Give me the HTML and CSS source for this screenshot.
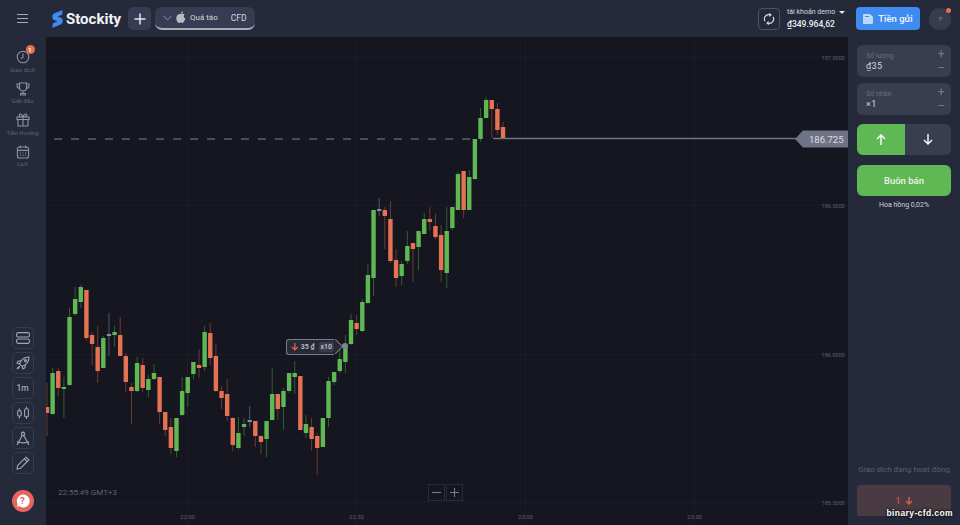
FILE: index.html
```html
<!DOCTYPE html>
<html lang="vi">
<head>
<meta charset="UTF-8">
<meta name="viewport" content="width=device-width, initial-scale=1.0">
<title>Stockity</title>
<link rel="stylesheet" href="styles.css">
</head>
<body>

<div class="app">
<header class="topbar">
    <div class="menu-btn"><span></span><span></span><span></span></div>
    <div class="logo">
        <svg width="11" height="18" viewBox="0 0 11 18">
            <path d="M10.5 0 L2 3.6 Q.4 4.4 .4 6 L.4 8 Q.4 9.4 2 10 L5.5 11.2 L.8 13.4 L.4 18 L9 14.2 Q10.6 13.4 10.6 12 L10.6 9.6 Q10.6 8.2 9 7.7 L5.6 6.6 L10.2 4.6 Z" fill="#3f8cf0"/>
        </svg>
        <span>Stockity</span>
    </div>
    <div class="add-btn">
        <svg width="12" height="12" viewBox="0 0 12 12"><path d="M6 .5V11.5M.5 6H11.5" stroke="#e6e8ee" stroke-width="1.5"/></svg>
    </div>
    <div class="asset">
        <svg class="asset-chev" width="9" height="6" viewBox="0 0 9 6"><path d="M.7 1 L4.5 5 L8.3 1" fill="none" stroke="#8e92a3" stroke-width="1"/></svg>
        <svg class="asset-apple" width="10" height="13" viewBox="0 0 10 13">
            <path d="M5 3.2C6 2.6 7.6 2.5 8.6 3.6 7.2 4.6 7.4 6.8 9.4 7.6 8.8 9.6 7.6 11.9 6.4 11.9 5.6 11.9 5.4 11.4 4.6 11.4 3.8 11.4 3.4 11.9 2.8 11.9 1.6 11.9 .3 9.2 .3 7 .3 4 3 2.4 5 3.2ZM4.9 2.7C4.8 1.6 5.8 .5 7 .4 7.1 1.6 6 2.8 4.9 2.7Z" fill="#b9bbc4"/>
        </svg>
        <span class="asset-name">Quả táo</span>
        <span class="asset-type">CFD</span>
    </div>

    <div class="topbar-right">
        <div class="sync-btn">
            <svg width="12" height="12" viewBox="0 0 12 12" fill="none" stroke="#dfe1e8" stroke-width="1.1">
                <path d="M2 8.2A4.3 4.3 0 0 1 6.8 1.8M10 3.8A4.3 4.3 0 0 1 5.2 10.2"/>
                <path d="M6.2 .4 L8 2 L6.2 3.4M5.8 8.6 L4 10 L5.8 11.6"/>
            </svg>
        </div>
        <div class="account">
            <div class="account-name">tài khoản demo <i class="caret"></i></div>
            <div class="account-balance">₫349.964,62</div>
        </div>
        <div class="deposit-btn">
            <svg width="10" height="10" viewBox="0 0 10 10"><path d="M1 0H7L10 3V9Q10 10 9 10H1Q0 10 0 9V1Q0 0 1 0Z" fill="#bcd8fb"/><path d="M2 2.5H6" stroke="#3f8cf0"/></svg>
            <span>Tiền gửi</span>
        </div>
        <div class="avatar">
            <svg width="5" height="4" viewBox="0 0 6 5"><path d="M0 0H6L3 5Z" fill="#5f6375"/></svg>
            <i class="avatar-dot"></i>
        </div>
    </div>
</header>

<div class="workspace">
    <aside class="sidebar">
        <nav class="nav">
            <div class="nav-item">
                <span class="nav-icon">
                    <svg width="14" height="14" viewBox="0 0 14 14" fill="none" stroke="#8e92a3" stroke-width="1.1"><circle cx="7" cy="7" r="5.8"/><path d="M7 3.6V7.4L4.8 8.6"/></svg>
                    <b class="badge">1</b>
                </span>
                Giao dịch
            </div>
            <div class="nav-item">
                <span class="nav-icon">
                    <svg width="14" height="14" viewBox="0 0 14 14" fill="none" stroke="#8e92a3" stroke-width="1.1"><path d="M3.5 1H10.5V5.5A3.5 3.5 0 0 1 3.5 5.5ZM3.5 2H1V4Q1 6 3.6 6.5M10.5 2H13V4Q13 6 10.4 6.5M7 9V11M4.5 13V11.5H9.5V13Z"/></svg>
                </span>
                Giải đấu
            </div>
            <div class="nav-item">
                <span class="nav-icon">
                    <svg width="14" height="14" viewBox="0 0 14 14" fill="none" stroke="#8e92a3" stroke-width="1.1"><path d="M1 4H13V6.5H1ZM2 6.5V13H12V6.5M7 4V13M7 4Q3 4 3.2 2 3.6 .4 5.2 1.2 6.4 2 7 4ZM7 4Q11 4 10.8 2 10.4 .4 8.8 1.2 7.6 2 7 4Z"/></svg>
                </span>
                Tiền thưởng
            </div>
            <div class="nav-item">
                <span class="nav-icon">
                    <svg width="14" height="14" viewBox="0 0 14 14" fill="none" stroke="#8e92a3" stroke-width="1.1"><rect x="1.4" y="2" width="11.2" height="11" rx="2"/><path d="M1.4 5.4H12.6M4.4 .6V3.2M9.6 .6V3.2"/><path d="M3.8 8H5M6.4 8H7.6M9 8H10.2M3.8 10.4H5M6.4 10.4H7.6M9 10.4H10.2" stroke-width=".9"/></svg>
                </span>
                Lịch
            </div>
        </nav>

        <div class="tools">
            <div class="tool">
                <svg width="14" height="12" viewBox="0 0 14 12" fill="none" stroke="#a2a5b4" stroke-width="1.1"><rect x=".6" y=".6" width="12.8" height="4.4" rx="1.6"/><rect x=".6" y="7" width="12.8" height="4.4" rx="1.6"/></svg>
            </div>
            <div class="tool">
                <svg width="14" height="14" viewBox="0 0 14 14" fill="none" stroke="#a2a5b4" stroke-width="1.1"><path d="M13 1Q8 1 5 5L3.6 8 6 10.4 9 9Q13 6 13 1ZM5 5H2.4L1 7 3.6 8M9 9V11.6L7 13 6 10.4M3.4 10.6Q1.6 11 1.2 12.8 3 12.4 3.4 10.6Z"/><circle cx="9.4" cy="4.6" r="1"/></svg>
            </div>
            <div class="tool tool-text">1m</div>
            <div class="tool">
                <svg width="14" height="14" viewBox="0 0 14 14" fill="none" stroke="#a2a5b4" stroke-width="1.1"><rect x="1.6" y="4.6" width="3.6" height="5.4" rx="1.4"/><rect x="8.6" y="2.8" width="3.8" height="8" rx="1.4"/><path d="M3.4 2.4V4.6M3.4 10V12.4M10.5 .8V2.8M10.5 10.8V13"/></svg>
            </div>
            <div class="tool">
                <svg width="14" height="15" viewBox="0 0 14 15" fill="none" stroke="#a2a5b4" stroke-width="1.1"><circle cx="7" cy="3" r="1.6"/><path d="M6.2 4.4 1 14M7.8 4.4 13 14M.8 10.8Q7 13 13.2 10.8M7 .2V1.4"/></svg>
            </div>
            <div class="tool">
                <svg width="14" height="14" viewBox="0 0 14 14" fill="none" stroke="#a2a5b4" stroke-width="1.1"><path d="M10 1.2 12.8 4 4.6 12.2 1 13 1.8 9.4ZM8.4 2.8 11.2 5.6"/></svg>
            </div>
        </div>

        <div class="help">
            <svg width="14" height="14" viewBox="0 0 14 14"><path d="M7 .5A6.5 6.5 0 1 1 3 12L.8 13 1.6 10A6.5 6.5 0 0 1 7 .5Z" fill="#fff"/></svg>
            <b>?</b>
        </div>
    </aside>

    <main class="chart">
        <svg class="chart-svg" id="chartSvg" width="802" height="488" viewBox="46 37 802 488">
            <g class="grid">
                <path d="M46 57.5H848M46 205.5H848M46 354.5H848M46 502.5H848"/>
                <path d="M187.5 37V525M356.5 37V525M525.5 37V525M694.5 37V525"/>
            </g>
            <g class="axis-y">
                <text x="845" y="59.500">187.0000</text>
                <text x="845" y="207.500">186.5000</text>
                <text x="845" y="356.500">186.0000</text>
                <text x="845" y="505">185.5000</text>
            </g>
            <g class="axis-x">
                <text x="187.500" y="519">22:00</text>
                <text x="356.500" y="519">22:30</text>
                <text x="525.500" y="519">23:00</text>
                <text x="694.500" y="519">23:30</text>
            </g>
            <path class="price-dash" d="M54 139H478"/>
            <path class="price-line" d="M493 138.500H800"/>
            <g id="candles"></g>
            <path class="price-tag" d="M795 139 L803 130.500 H848 V147.500 H803 Z"/>
            <text class="price-text" x="809" y="142.500">186.725</text>
        </svg>

        <div class="order-tag">
            <svg width="8" height="8" viewBox="0 0 8 8"><path d="M4 0V7M1 4 4 7 7 4" fill="none" stroke="#e5604f" stroke-width="1.4"/></svg>
            <span class="order-amount">35 ₫</span>
            <span class="order-mult">x10</span>
        </div>
        <i class="order-dot"></i>

        <div class="clock">22:55:49 GMT+3</div>
        <div class="zoom-btns">
            <span>
                <svg width="9" height="9" viewBox="0 0 9 9"><path d="M0 4.500H9" stroke="#777b8c" stroke-width="1.1"/></svg>
            </span>
            <span>
                <svg width="9" height="9" viewBox="0 0 9 9"><path d="M0 4.500H9M4.500 0V9" stroke="#777b8c" stroke-width="1.1"/></svg>
            </span>
        </div>
    </main>

    <aside class="panel">
        <div class="field">
            <div>
                <div class="field-label">Số lượng</div>
                <div class="field-value">₫35</div>
            </div>
            <div class="field-steps"><span>+</span><span>–</span></div>
        </div>
        <div class="field">
            <div>
                <div class="field-label">Số nhân</div>
                <div class="field-value">×1</div>
            </div>
            <div class="field-steps"><span>+</span><span>–</span></div>
        </div>
        <div class="direction">
            <div class="dir dir-up">
                <svg width="10" height="11" viewBox="0 0 10 11"><path d="M5 11V1M1 5 5 1 9 5" fill="none" stroke="#fff" stroke-width="1.4"/></svg>
            </div>
            <div class="dir">
                <svg width="10" height="11" viewBox="0 0 10 11"><path d="M5 0V10M1 6 5 10 9 6" fill="none" stroke="#fff" stroke-width="1.4"/></svg>
            </div>
        </div>
        <div class="trade-btn">Buôn bán</div>
        <div class="fee">Hoa hồng 0,02%</div>

        <div class="active">
            <div class="active-title">Giao dịch đang hoạt động</div>
            <div class="active-box">
                1
                <svg width="8" height="8" viewBox="0 0 8 8"><path d="M4 0V7M1 4 4 7 7 4" fill="none" stroke="#d9634a" stroke-width="1.4"/></svg>
            </div>
        </div>
    </aside>
</div>
</div>

<div class="watermark">binary-cfd.com</div>

<script src="chart.js"></script>
</body>
</html>
```

FILE: styles.css
```css
body {
    margin: 0;
    width: 960px;
    height: 525px;
    overflow: hidden;
    position: relative;
    font-family: Roboto, "Noto Sans", sans-serif;
    background-color: #15161f;
    color: #e6e8ee;
}

.app {
    display: flex;
    flex-direction: column;
    height: 525px;
}

/* top bar */
.topbar {
    height: 37px;
    flex: none;
    box-sizing: border-box;
    display: flex;
    align-items: center;
    padding: 0 9px 0 17px;
    background-color: #252a3a;
}

.menu-btn {
    width: 11px;
    flex: none;
    display: flex;
    flex-direction: column;
    gap: 3px;
    margin-right: 24px;
}

.menu-btn span {
    height: 1px;
    background-color: #a9acb9;
}

.logo {
    display: flex;
    align-items: center;
    gap: 3px;
    margin-right: 9px;
    width: 67px;
    flex: none;
}

.logo svg {
    flex: none;
}

.logo span {
    font-size: 15px;
    font-weight: 700;
    color: #f1f2f5;
}

.add-btn {
    width: 23px;
    height: 23px;
    flex: none;
    border-radius: 5px;
    background-color: #373c52;
    display: flex;
    align-items: center;
    justify-content: center;
    margin-right: 4px;
}

.asset {
    width: 100px;
    height: 23px;
    box-sizing: border-box;
    border-radius: 7px;
    background-color: #373c52;
    border-bottom: 2px solid #a8abb6;
    display: flex;
    align-items: center;
    padding-left: 8px;
    font-size: 8px;
    color: #d5d7de;
}

.asset-chev {
    margin-right: 4px;
}

.asset-apple {
    margin-right: 4px;
}

.asset-type {
    margin-left: 13px;
    font-size: 8.5px;
}

.topbar-right {
    margin-left: auto;
    display: flex;
    align-items: center;
}

.sync-btn {
    width: 22px;
    height: 22px;
    box-sizing: border-box;
    border: 1px solid #4d5165;
    border-radius: 4px;
    display: flex;
    align-items: center;
    justify-content: center;
    margin-right: 7px;
}

.account {
    width: 69px;
    font-size: 7px;
    color: #d5d7de;
}

.account-name {
    display: flex;
    align-items: center;
    gap: 4px;
    line-height: 11px;
}

.caret {
    width: 0;
    height: 0;
    border-left: 3px solid transparent;
    border-right: 3px solid transparent;
    border-top: 3px solid #e6e8ee;
}

.account-balance {
    font-size: 8.500px;
    font-weight: 500;
    line-height: 12px;
    color: #eceef2;
}

.deposit-btn {
    width: 64px;
    height: 23px;
    box-sizing: border-box;
    border-radius: 4px;
    background-color: #3f8cf0;
    display: flex;
    align-items: center;
    justify-content: center;
    gap: 5px;
    font-size: 9.500px;
    font-weight: 500;
    color: #eef5fe;
}

.avatar {
    width: 22px;
    height: 22px;
    border-radius: 50%;
    background-color: #373c4e;
    margin-left: 9px;
    display: flex;
    align-items: center;
    justify-content: center;
    position: relative;
}

.avatar-dot {
    position: absolute;
    top: 0;
    right: 0;
    width: 5px;
    height: 5px;
    border-radius: 50%;
    background-color: #e5704f;
}

.workspace {
    flex: 1;
    display: flex;
    min-height: 0;
}

/* left sidebar */
.sidebar {
    width: 46px;
    flex: none;
    box-sizing: border-box;
    padding-right: 1px;
    display: flex;
    flex-direction: column;
    align-items: center;
    background-color: #252a3a;
}

.nav {
    margin-top: 13px;
    display: flex;
    flex-direction: column;
    gap: 8px;
}

.nav-item {
    height: 23.500px;
    display: flex;
    flex-direction: column;
    align-items: center;
    gap: 1.500px;
    font-size: 6px;
    line-height: 7px;
    color: #5f6375;
    white-space: nowrap;
}

.nav-icon {
    position: relative;
    display: block;
    height: 14px;
}

.nav-icon svg {
    display: block;
}

.badge {
    position: absolute;
    top: -5px;
    right: -5px;
    width: 9px;
    height: 9px;
    border-radius: 50%;
    background-color: #e5704f;
    color: #fff;
    font-size: 6px;
    line-height: 9px;
    text-align: center;
}

.tools {
    margin-top: 159px;
    display: flex;
    flex-direction: column;
    gap: 3px;
}

.tool {
    width: 22px;
    height: 22px;
    box-sizing: border-box;
    border: 1px solid #363b4d;
    border-radius: 5px;
    display: flex;
    align-items: center;
    justify-content: center;
}

.tool-text {
    font-size: 8.500px;
    font-weight: 500;
    color: #a2a5b4;
}

.help {
    margin-top: 16px;
    width: 22px;
    height: 22px;
    border-radius: 50%;
    background-color: #e5665f;
    display: flex;
    align-items: center;
    justify-content: center;
    position: relative;
}

.help b {
    position: absolute;
    font-size: 9px;
    line-height: 22px;
    color: #e5665f;
}

/* chart */
.chart {
    flex: 1;
    position: relative;
    background-color: #15161f;
}

.chart-svg {
    display: block;
}

.grid path {
    stroke: #1b1c27;
    stroke-width: 1;
    fill: none;
}

.axis-y text {
    font-size: 5.600px;
    fill: #5c5f6c;
    text-anchor: end;
}

.axis-x text {
    font-size: 6px;
    fill: #5f626e;
    text-anchor: middle;
}

.price-dash {
    stroke: #7f8290;
    stroke-width: 1;
    stroke-dasharray: 8 9;
    fill: none;
}

.price-line {
    stroke: #6f7385;
    stroke-width: 1.5;
    fill: none;
}

.price-tag {
    fill: #6f7385;
}

.price-text {
    font-size: 9.500px;
    fill: #dcdee4;
}

.order-tag {
    position: absolute;
    left: 240px;
    top: 302px;
    width: 48px;
    height: 16px;
    box-sizing: border-box;
    padding-left: 4px;
    border: 1px solid #777b8a;
    border-right: none;
    border-radius: 3px 0 0 3px;
    background-color: #262a37;
    display: flex;
    align-items: center;
    gap: 2px;
    font-size: 7px;
    font-weight: 500;
    white-space: nowrap;
    color: #c8cad2;
}

.order-tag::after {
    content: "";
    position: absolute;
    left: 43px;
    top: 1px;
    width: 11px;
    height: 11px;
    box-sizing: border-box;
    border-top: 1px solid #777b8a;
    border-right: 1px solid #777b8a;
    background-color: #262a37;
    transform: rotate(45deg);
}

.order-amount {
    flex: none;
}

.order-mult {
    flex: none;
    margin-left: 2px;
    padding: 1px 2px;
    border-radius: 2px;
    background-color: #383c4b;
    position: relative;
    z-index: 1;
}

.order-dot {
    position: absolute;
    left: 296px;
    top: 306px;
    width: 6px;
    height: 6px;
    border-radius: 50%;
    background-color: #7f8394;
}

.clock {
    position: absolute;
    left: 12px;
    top: 451px;
    font-size: 8px;
    color: #5f6270;
}

.zoom-btns {
    position: absolute;
    left: 382px;
    top: 447px;
    display: flex;
    gap: 1px;
}

.zoom-btns span {
    width: 17px;
    height: 17px;
    box-sizing: border-box;
    border: 1px solid #2a2d39;
    display: flex;
    align-items: center;
    justify-content: center;
}

/* right panel */
.panel {
    width: 112px;
    flex: none;
    box-sizing: border-box;
    padding: 8px 9px 9px;
    display: flex;
    flex-direction: column;
    background-color: #252a3a;
}

.field {
    height: 32px;
    box-sizing: border-box;
    margin-bottom: 6px;
    padding: 7px 6px 0 9px;
    border-radius: 6px;
    background-color: #393d50;
    display: flex;
    justify-content: space-between;
}

.field-label {
    font-size: 7px;
    line-height: 9px;
    color: #6a6e80;
}

.field-value {
    font-size: 9px;
    line-height: 11px;
    letter-spacing: 0.4px;
    color: #d5d7de;
}

.field-steps {
    display: flex;
    flex-direction: column;
    align-items: center;
    margin-top: -5px;
    font-size: 12px;
    line-height: 14px;
    color: #737789;
}

.direction {
    display: flex;
    height: 31px;
    margin-top: 3px;
    border-radius: 6px;
    overflow: hidden;
    background-color: #393d50;
}

.dir {
    flex: 1;
    display: flex;
    align-items: center;
    justify-content: center;
}

.dir-up {
    flex: none;
    width: 48px;
    background-color: #5fb854;
}

.trade-btn {
    height: 31px;
    margin-top: 10px;
    border-radius: 6px;
    background-color: #5fb854;
    display: flex;
    align-items: center;
    justify-content: center;
    font-size: 9.500px;
    font-weight: 500;
    color: #e9f5e6;
}

.fee {
    margin-top: 5px;
    font-size: 7px;
    line-height: 9px;
    text-align: center;
    color: #cfd1d8;
}

.active {
    margin-top: auto;
}

.active-title {
    font-size: 8px;
    line-height: 10px;
    text-align: center;
    white-space: nowrap;
    margin: 0 -2px 10px;
    color: #5b5f71;
}

.active-box {
    height: 31px;
    border-radius: 3px;
    background-color: #4a3a42;
    display: flex;
    align-items: center;
    justify-content: center;
    gap: 4px;
    font-size: 9px;
    color: #d9634a;
}

.watermark {
    position: absolute;
    right: 7px;
    top: 507px;
    font-family: "Liberation Sans", sans-serif;
    font-size: 8.500px;
    line-height: 12px;
    font-weight: 700;
    letter-spacing: 0.4px;
    color: #fff;
    text-shadow: 0 0 2px #14141c, 0 0 2px #14141c, 0 0 3px #14141c;
}
```

FILE: chart.js
```js
const svg = document.getElementById('candles');
const NS = 'http://www.w3.org/2000/svg';

const colors = {
    r: { body: '#e57254', wick: '#6b3a33' },
    g: { body: '#5fb854', wick: '#2f5f30' },
    x: { body: '#8a8d9b', wick: '#54566a' }
};

// type, wick top, body top, body bottom, wick bottom
const candles = [
    ['r', 383, 407, 413, 436], ['g', 368, 373, 414, 415], ['r', 368, 371, 388, 396],
    ['g', 377, 387, 389, 418], ['g', 308, 317, 385, 386], ['g', 287, 299, 314, 316],
    ['g', 285, 287, 302, 308], ['r', 290, 290, 338, 341], ['r', 332, 335, 344, 365],
    ['r', 326, 347, 371, 383], ['g', 336, 338, 368, 368], ['x', 313, 334, 336, 356],
    ['g', 326, 332, 335, 347], ['r', 317, 335, 356, 356], ['r', 353, 356, 382, 392],
    ['r', 383, 387, 391, 424], ['g', 357, 363, 391, 392], ['r', 358, 365, 388, 392],
    ['g', 375, 379, 390, 397], ['g', 364, 373, 379, 380], ['r', 377, 377, 412, 424],
    ['r', 412, 412, 430, 436], ['r', 418, 427, 448, 454], ['g', 418, 418, 451, 457],
    ['g', 377, 391, 415, 416], ['g', 377, 377, 393, 407], ['g', 362, 362, 374, 379],
    ['r', 349, 365, 368, 378], ['g', 326, 332, 367, 371], ['r', 323, 333, 358, 365],
    ['r', 344, 356, 391, 392], ['r', 386, 391, 398, 409], ['r', 379, 394, 416, 421],
    ['r', 417, 418, 445, 451], ['g', 417, 433, 448, 450], ['g', 418, 424, 427, 436],
    ['x', 406, 420, 422, 427], ['r', 421, 421, 436, 447], ['r', 435, 436, 442, 454],
    ['g', 421, 421, 439, 457], ['g', 368, 394, 420, 420], ['r', 394, 394, 409, 420],
    ['g', 388, 391, 407, 430], ['g', 373, 373, 391, 393], ['g', 361, 373, 377, 394],
    ['r', 376, 376, 430, 430], ['g', 415, 424, 433, 438], ['r', 418, 427, 439, 451],
    ['r', 433, 436, 448, 475], ['g', 418, 418, 447, 447], ['g', 377, 381, 418, 427],
    ['g', 372, 372, 382, 385], ['g', 347, 359, 371, 373], ['g', 335, 347, 362, 373],
    ['g', 314, 320, 344, 345], ['r', 315, 323, 329, 335], ['g', 299, 302, 331, 332],
    ['g', 264, 275, 303, 304], ['g', 210, 210, 278, 296], ['x', 198, 209, 211, 216],
    ['r', 207, 210, 216, 249], ['r', 201, 219, 261, 263], ['r', 249, 260, 278, 287],
    ['g', 261, 264, 276, 285], ['g', 231, 246, 261, 264], ['r', 243, 243, 249, 282],
    ['g', 231, 231, 247, 270], ['g', 213, 219, 234, 234], ['r', 207, 219, 222, 231],
    ['r', 214, 226, 237, 239], ['r', 225, 235, 270, 282], ['g', 207, 231, 273, 288],
    ['g', 207, 207, 228, 230], ['g', 172, 174, 210, 210], ['r', 171, 171, 210, 218],
    ['g', 170, 177, 210, 210], ['g', 139, 139, 179, 180], ['g', 108, 118, 139, 142],
    ['g', 97, 100, 118, 118], ['r', 100, 100, 109, 138], ['r', 103, 109, 130, 135],
    ['r', 122, 127, 138, 139]
];

function addRect(x, y, w, h, fill, radius) {
    const rect = document.createElementNS(NS, 'rect');
    rect.setAttribute('x', x);
    rect.setAttribute('y', y);
    rect.setAttribute('width', w);
    rect.setAttribute('height', h);
    rect.setAttribute('fill', fill);
    if (radius) rect.setAttribute('rx', radius);
    svg.appendChild(rect);
}

candles.forEach((c, i) => {
    const [type, wickTop, bodyTop, bodyBottom, wickBottom] = c;
    const x = 47 + i * 5.63;
    addRect(x - 0.5, wickTop, 1, wickBottom - wickTop, colors[type].wick);
    addRect(x - 2.2, bodyTop, 4.4, Math.max(bodyBottom - bodyTop, 2), colors[type].body, 0.5);
});
```
